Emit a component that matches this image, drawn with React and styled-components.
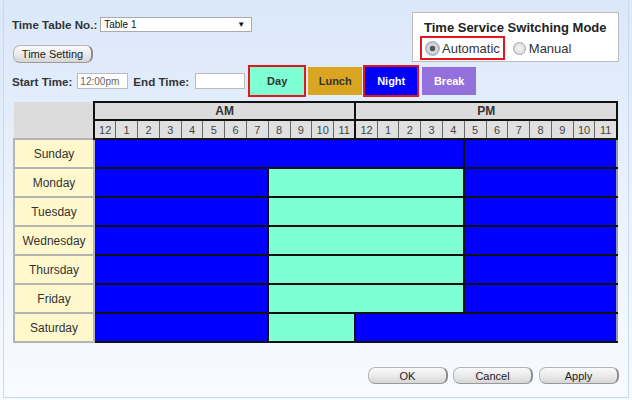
import React from "react";
import styled, { createGlobalStyle } from "styled-components";

const Global = createGlobalStyle`
  html, body { margin: 0; padding: 0; }
  body {
    width: 632px; height: 400px; overflow: hidden;
    background: linear-gradient(#dbe8fa, #f8fbff);
    font-family: "Liberation Sans", Arial, sans-serif;
    color: #333;
  }
`;

const Panel = styled.div`
  box-sizing: border-box;
  margin: 0 3px;
  height: 398px;
  border: 1px solid #c6daf6;
  border-top: none;
  background: linear-gradient(#dbe8fa 0%, #e8f1fc 45%, #f8fbff 100%);
  padding: 12px 9px 0 8px;
`;

const Top = styled.div`
  display: flex;
  justify-content: space-between;
  align-items: flex-start;
  height: 52px;
`;

const LeftCol = styled.div`
  display: flex;
  flex-direction: column;
  align-items: flex-start;
  padding-top: 5px;
`;

const Line = styled.div`
  display: flex;
  align-items: center;
  height: 14px;
`;

const Label = styled.span`
  font-weight: bold;
  font-size: 11.6px;
  color: #333;
  margin-right: ${(p) => p.$mr || 4}px;
  white-space: nowrap;
`;

const FakeSelect = styled.div`
  box-sizing: border-box;
  width: 152px;
  height: 15px;
  border: 1px solid #aaa;
  background: #fff;
  display: flex;
  align-items: center;
  justify-content: space-between;
  padding: 0 6px 0 3px;
  font-size: 10px;
  color: #111;
`;

const Arrow = styled.span`
  font-size: 8px;
  color: #111;
`;

const GrayButton = styled.button`
  box-sizing: border-box;
  width: 80px;
  height: ${(p) => p.$h || 17}px;
  padding: 0;
  border: 1px solid #b5b5b5;
  border-right: 2px solid #8c8c8c;
  border-bottom-color: #999;
  border-radius: 7px;
  background: linear-gradient(#fafafa, #e9e9e9 55%, #d6d6d6);
  font-family: "Liberation Sans", Arial, sans-serif;
  font-size: 11px;
  color: #222;
  margin-left: ${(p) => p.$ml || 0}px;
  margin-top: ${(p) => p.$mt || 0}px;
  cursor: pointer;
`;

const ModeBox = styled.div`
  box-sizing: border-box;
  width: 207px;
  height: 50px;
  border: 1px solid #bdbdbd;
  background: #fff;
  padding: 7px 0 0 7px;
`;

const ModeTitle = styled.div`
  font-weight: bold;
  font-size: 13px;
  color: #222;
  padding-left: 4px;
`;

const RadioRow = styled.div`
  display: flex;
  align-items: center;
  margin-top: 1px;
`;

const RadioLabel = styled.label`
  box-sizing: border-box;
  display: flex;
  align-items: center;
  height: 24px;
  padding: 0 3px 0 4px;
  border: 2px solid ${(p) => (p.$hl ? "#e3161e" : "transparent")};
  font-size: 13px;
  color: #333;
  margin-right: ${(p) => p.$mr || 0}px;
`;

const Radio = styled.span`
  box-sizing: border-box;
  width: 13px;
  height: 13px;
  border-radius: 50%;
  border: 1px solid #a5a5a5;
  background: ${(p) => (p.$on ? "radial-gradient(#555 0 2.5px, #ccc 3px, #e6e6e6 6px)" : "radial-gradient(#f4f4f4, #d6d6d6)")};
  margin-right: 3px;
  ${(p) => p.$on && "box-shadow: 0 0 0 1px #9ab7e0;"}
`;

const TimeRow = styled.div`
  display: flex;
  align-items: center;
  height: 34px;
`;

const TimeInput = styled.div`
  box-sizing: border-box;
  width: ${(p) => p.$w || 51}px;
  height: 16px;
  border: 1px solid #bbb;
  background: #fff;
  font-size: 10px;
  color: #666;
  display: flex;
  align-items: center;
  padding-left: 2px;
  margin-right: ${(p) => p.$mr || 0}px;
`;

const Shift = styled.button`
  box-sizing: border-box;
  width: ${(p) => p.$w || 54}px;
  height: 28px;
  padding: 0;
  border: none;
  background: ${(p) => p.$bg};
  color: ${(p) => p.$fg};
  font-family: "Liberation Sans", Arial, sans-serif;
  font-weight: bold;
  font-size: 11px;
  margin-left: ${(p) => p.$ml || 0}px;
  outline: ${(p) => (p.$sel ? "2px solid #e3161e" : "none")};
  outline-offset: 0;
`;

const Grid = styled.table`
  margin: 3px 0 0 1px;
  width: 605px;
  table-layout: fixed;
  border-collapse: collapse;
  font-family: "Liberation Sans", Arial, sans-serif;
`;

const Corner = styled.th`
  background: #dcdcdc;
  border: none;
  padding: 0;
`;

const Half = styled.th`
  height: 16px;
  padding: 0;
  background: #dcdcdc;
  border: 2px solid #111;
  font-size: 12px;
  font-weight: bold;
  color: #333;
`;

const Hour = styled.td`
  height: 17px;
  padding: 0;
  background: #e0e0e0;
  border: 1px solid #666;
  border-bottom: 2px solid #111;
  ${(p) => p.$first && "border-left: 2px solid #111;"}
  ${(p) => p.$last && "border-right: 2px solid #111;"}
  font-size: 11px;
  color: #444;
  text-align: center;
`;

const Day = styled.td`
  height: 27px;
  padding: 0;
  background: #fff8cd;
  border: 2px solid #b4b4b4;
  font-size: 12px;
  color: #333;
  text-align: center;
`;

const Seg = styled.td`
  padding: 0;
  background: ${(p) => (p.$kind === "day" ? "#7fffd4" : "#0000ff")};
  border: 2px solid #111;
  border-right-color: ${(p) => (p.$end ? "#9a9a9a" : "#111")};
`;

const Footer = styled.div`
  display: flex;
  justify-content: flex-end;
  margin-top: 24px;
`;

const hours = ["12", "1", "2", "3", "4", "5", "6", "7", "8", "9", "10", "11"];

const schedule = [
  ["Sunday", [["night", 17], ["night", 7]]],
  ["Monday", [["night", 8], ["day", 9], ["night", 7]]],
  ["Tuesday", [["night", 8], ["day", 9], ["night", 7]]],
  ["Wednesday", [["night", 8], ["day", 9], ["night", 7]]],
  ["Thursday", [["night", 8], ["day", 9], ["night", 7]]],
  ["Friday", [["night", 8], ["day", 9], ["night", 7]]],
  ["Saturday", [["night", 8], ["day", 4], ["night", 12]]],
];

export default function App() {
  return (
    <>
      <Global />
      <Panel>
        <Top>
          <LeftCol>
            <Line>
              <Label $mr={3}>Time Table No.:</Label>
              <FakeSelect>
                <span>Table 1</span>
                <Arrow>▼</Arrow>
              </FakeSelect>
            </Line>
            <GrayButton $h={18} $ml={1} $mt={14}>Time Setting</GrayButton>
          </LeftCol>
          <ModeBox>
            <ModeTitle>Time Service Switching Mode</ModeTitle>
            <RadioRow>
              <RadioLabel $hl $mr={2}>
                <Radio $on />
                Automatic
              </RadioLabel>
              <RadioLabel>
                <Radio />
                Manual
              </RadioLabel>
            </RadioRow>
          </ModeBox>
        </Top>
        <TimeRow>
          <Label $mr={5}>Start Time:</Label>
          <TimeInput $mr={5}>12:00pm</TimeInput>
          <Label $mr={6}>End Time:</Label>
          <TimeInput $w={50}>&nbsp;</TimeInput>
          <Shift $bg="#7fffd4" $fg="#333" $sel $ml={5}>Day</Shift>
          <Shift $bg="#daa520" $fg="#333" $ml={4}>Lunch</Shift>
          <Shift $bg="#0000ff" $fg="#fff" $sel $w={52} $ml={3}>Night</Shift>
          <Shift $bg="#9370db" $fg="#fff" $ml={5}>Break</Shift>
        </TimeRow>
        <Grid>
          <colgroup>
            <col style={{ width: 80 }} />
            {Array.from({ length: 24 }).map((_, i) => (
              <col key={i} />
            ))}
          </colgroup>
          <thead>
            <tr>
              <Corner rowSpan={2} />
              <Half colSpan={12}>AM</Half>
              <Half colSpan={12}>PM</Half>
            </tr>
            <tr>
              {[...hours, ...hours].map((h, i) => (
                <Hour key={i} $first={i === 0 || i === 12} $last={i === 11 || i === 23}>
                  {h}
                </Hour>
              ))}
            </tr>
          </thead>
          <tbody>
            {schedule.map(([name, segs]) => (
              <tr key={name}>
                <Day>{name}</Day>
                {segs.map(([kind, span], i) => (
                  <Seg key={i} colSpan={span} $kind={kind} $end={i === segs.length - 1} />
                ))}
              </tr>
            ))}
          </tbody>
        </Grid>
        <Footer>
          <GrayButton>OK</GrayButton>
          <GrayButton $ml={5}>Cancel</GrayButton>
          <GrayButton $ml={6}>Apply</GrayButton>
        </Footer>
      </Panel>
    </>
  );
}
